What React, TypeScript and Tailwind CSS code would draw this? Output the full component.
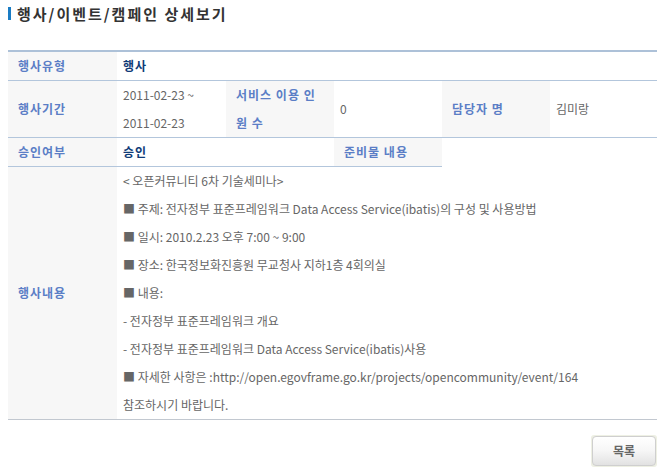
const th = "bg-[#f7f7f7] text-[#5b7ec6] font-bold tracking-[1px] text-left align-middle pl-[10px] pr-1 border-b border-[#b3c6dc]";
const td = "bg-white text-[#666] text-left align-middle pl-[6px] pr-1 border-b border-[#b3c6dc]";

const lines = [
  "< 오픈커뮤니티 6차 기술세미나>",
  "■ 주제: 전자정부 표준프레임워크 Data Access Service(ibatis)의 구성 및 사용방법",
  "■ 일시: 2010.2.23 오후 7:00 ~ 9:00",
  "■ 장소: 한국정보화진흥원 무교청사 지하1층 4회의실",
  "■ 내용:",
  "- 전자정부 표준프레임워크 개요",
  "- 전자정부 표준프레임워크 Data Access Service(ibatis)사용",
  "■ 자세한 사항은 :http://open.egovframe.go.kr/projects/opencommunity/event/164",
  "참조하시기 바랍니다.",
];

export default function App() {
  return (
    <div
      className="w-[665px] h-[469px] bg-white px-2 pt-1 text-[12px]"
      style={{ fontFamily: '"Noto Sans CJK KR", "Noto Sans", sans-serif' }}
    >
      <h2 className="flex items-center gap-[6px] h-[18px] text-[15px] font-bold tracking-[2px] text-[#333] leading-none">
        <span className="inline-block w-[3px] h-[13px] bg-[#1a7cc4]" />
        행사/이벤트/캠페인 상세보기
      </h2>

      <table className="mt-[28px] w-[649px] table-fixed border-collapse border-t-2 border-[#adc1d8] leading-[28px]">
        <colgroup>
          <col className="w-[109px]" />
          <col className="w-[109px]" />
          <col className="w-[108px]" />
          <col className="w-[108px]" />
          <col className="w-[108px]" />
          <col className="w-[107px]" />
        </colgroup>
        <tbody>
          <tr>
            <th className={th}>행사유형</th>
            <td colSpan={5} className={td + " !text-[#0f3b78] font-bold tracking-[1px]"}>
              행사
            </td>
          </tr>
          <tr>
            <th className={th}>행사기간</th>
            <td className={td}>
              2011-02-23 ~
              <br />
              2011-02-23
            </td>
            <th className={th}>
              서비스 이용 인
              <br />
              원 수
            </th>
            <td className={td}>0</td>
            <th className={th}>담당자 명</th>
            <td className={td}>김미랑</td>
          </tr>
          <tr>
            <th className={th}>승인여부</th>
            <td colSpan={2} className={td + " !text-[#0f3b78] font-bold tracking-[1px]"}>
              승인
            </td>
            <th className={th}>준비물 내용</th>
          </tr>
          <tr>
            <th className={th + " border-[#c2c8d0]"}>행사내용</th>
            <td colSpan={5} className={td + " border-[#c2c8d0]"}>
              {lines.map((l) => (
                <div key={l}>{l}</div>
              ))}
            </td>
          </tr>
        </tbody>
      </table>

      <div className="flex justify-end mt-[15px]">
        <div className="p-[1px] bg-[#eef0e4] rounded-[3px]">
          <button className="w-[64px] h-[30px] rounded-[4px] border border-[#cfcfcf] bg-gradient-to-b from-white via-[#f6f6f6] to-[#e2e2e2] text-[12px] font-bold text-[#666]">
            목록
          </button>
        </div>
      </div>
    </div>
  );
}
